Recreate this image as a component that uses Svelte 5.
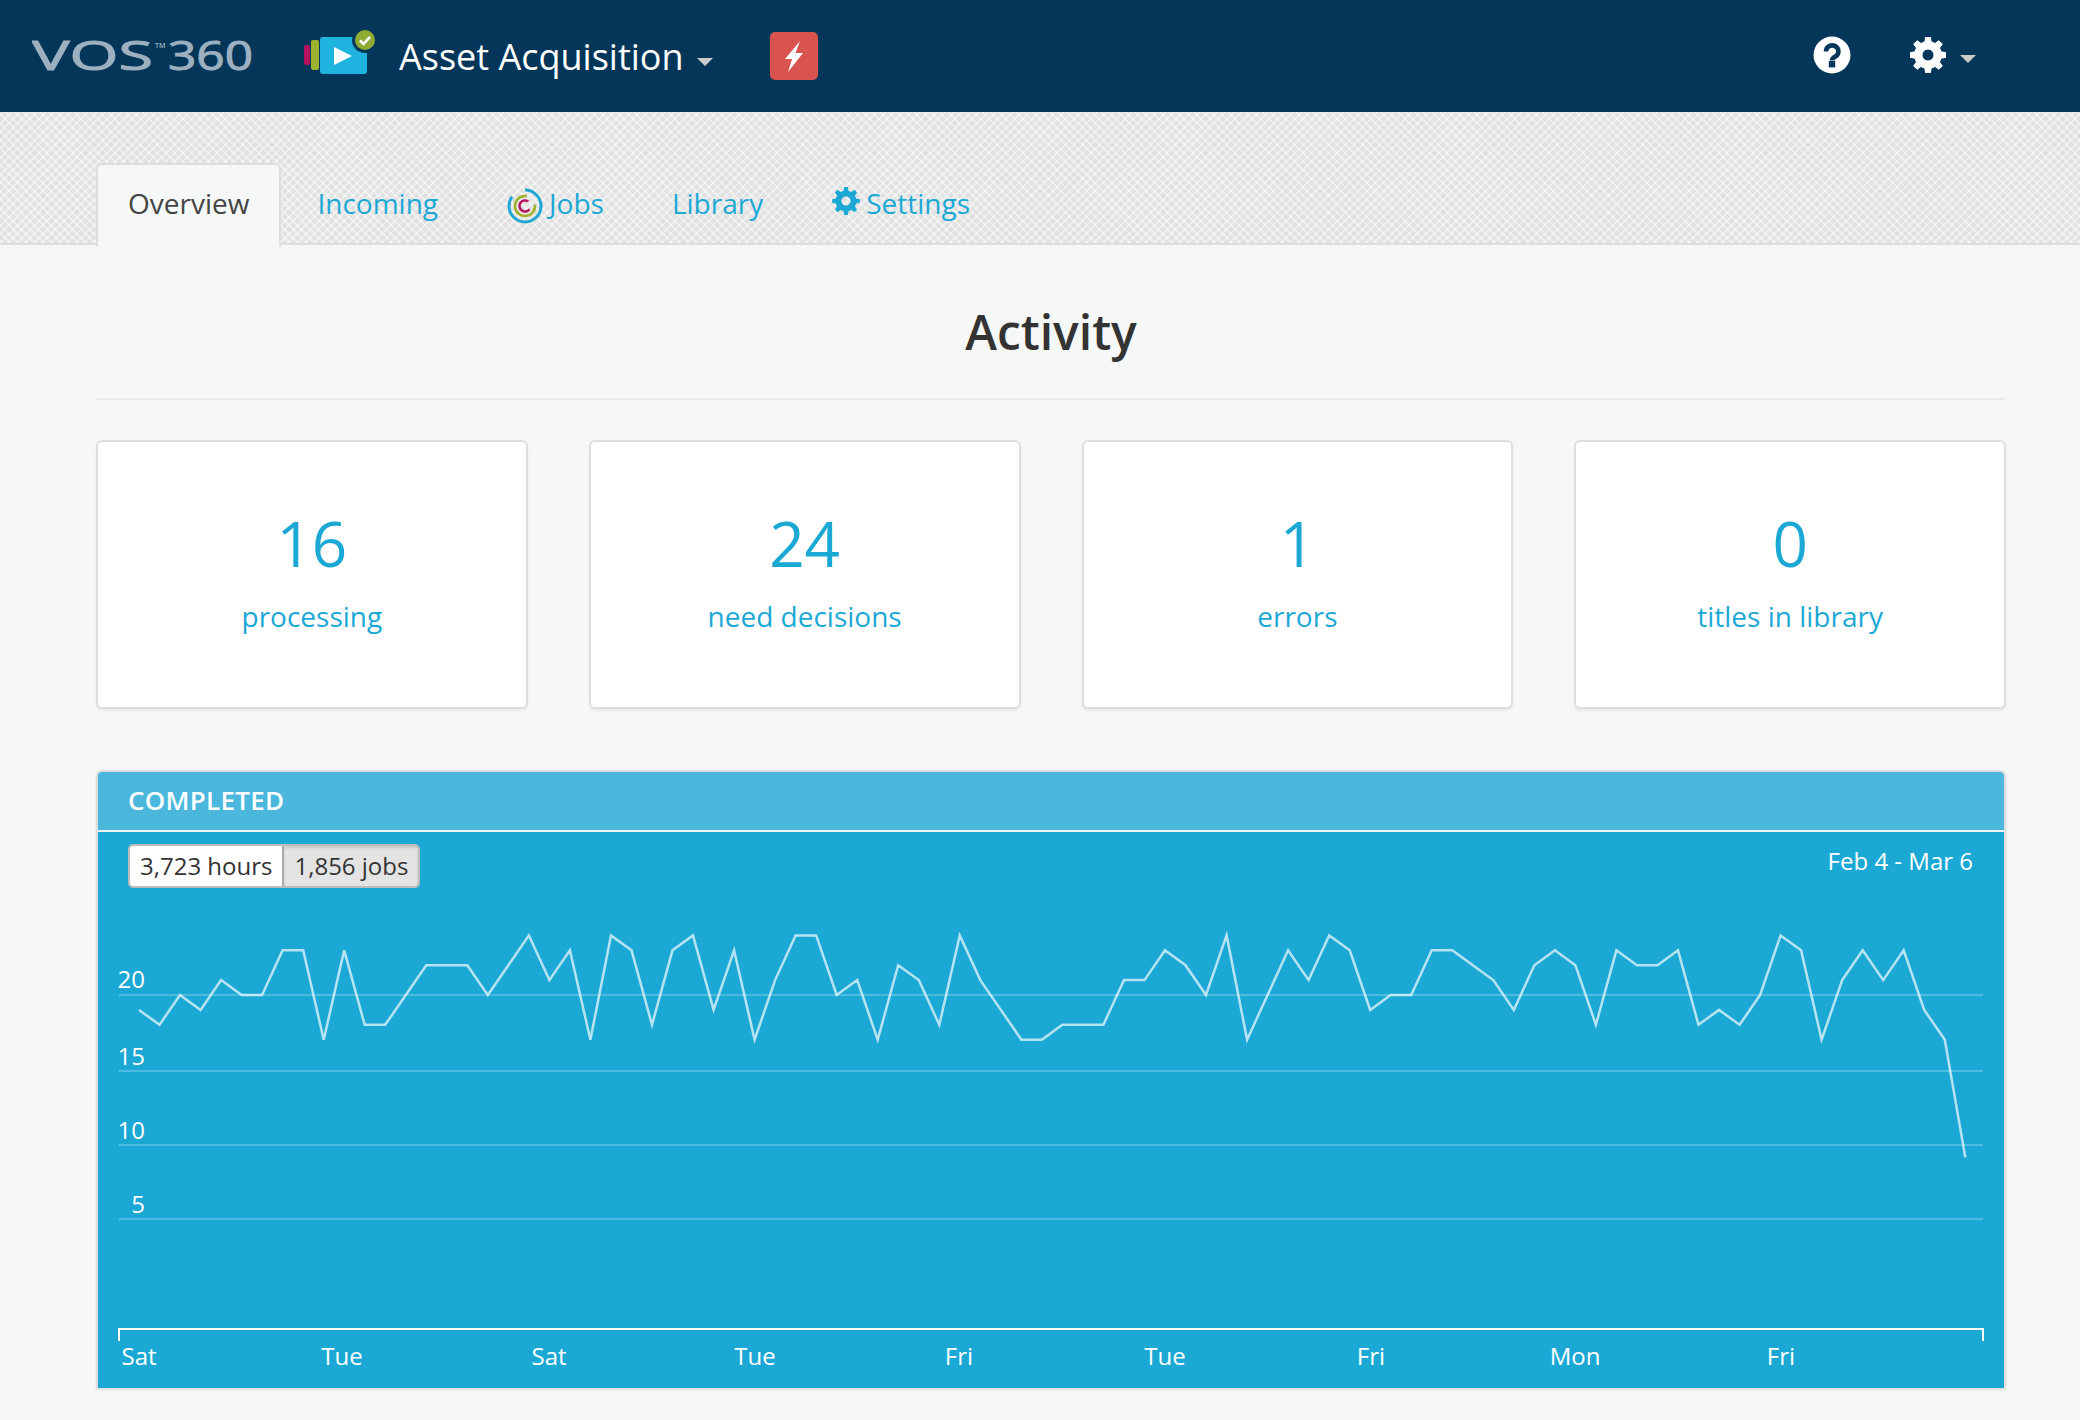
<script>
  const tabs = [
    { label: "Overview", active: true },
    { label: "Incoming" },
    { label: "Jobs", icon: "jobs" },
    { label: "Library" },
    { label: "Settings", icon: "gear" }
  ];

  const stats = [
    { value: 16, label: "processing" },
    { value: 24, label: "need decisions" },
    { value: 1, label: "errors" },
    { value: 0, label: "titles in library" }
  ];

  // jobs completed per sample, read off the reference chart
  const samples = [
    19, 18, 20, 19, 21, 20, 20, 23, 23, 17, 23, 18, 18, 20, 22, 22, 22, 20, 22, 24,
    21, 23, 17, 24, 23, 18, 23, 24, 19, 23, 17, 21, 24, 24, 20, 21, 17, 22, 21, 18,
    24, 21, 19, 17, 17, 18, 18, 18, 21, 21, 23, 22, 20, 24, 17, 20, 23, 21, 24, 23,
    19, 20, 20, 23, 23, 22, 21, 19, 22, 23, 22, 18, 23, 22, 22, 23, 18, 19, 18, 20,
    24, 23, 17, 21, 23, 21, 23, 19, 17, 9.1
  ];

  // chart space is the panel body: x from 98, y from 900
  const yFor = (v) => 95 + (20 - v) * 14.9;
  const points = samples.map((v, i) => `${(41 + i * 20.52).toFixed(1)},${yFor(v).toFixed(1)}`).join(" ");

  const gridLines = [
    { label: "20", y: 95, textY: 88 },
    { label: "15", y: 171, textY: 165 },
    { label: "10", y: 245, textY: 239 },
    { label: "5", y: 319, textY: 313 }
  ];

  const xLabels = [
    ["Sat", 41], ["Tue", 244], ["Sat", 451], ["Tue", 657], ["Fri", 861],
    ["Tue", 1067], ["Fri", 1273], ["Mon", 1477], ["Fri", 1683]
  ];

  function gearPath(cx, cy, outer, inner, hole, teeth = 8) {
    const step = (Math.PI * 2) / teeth;
    let d = "";
    for (let i = 0; i < teeth; i++) {
      const a = i * step - Math.PI / 2;
      const pts = [
        [inner, a - step * 0.3],
        [outer, a - step * 0.17],
        [outer, a + step * 0.17],
        [inner, a + step * 0.3]
      ];
      for (const [r, t] of pts) {
        d += `${d ? "L" : "M"}${(cx + r * Math.cos(t)).toFixed(2)} ${(cy + r * Math.sin(t)).toFixed(2)}`;
      }
    }
    d += `Z M${cx + hole} ${cy}a${hole} ${hole} 0 1 0 ${-hole * 2} 0a${hole} ${hole} 0 1 0 ${hole * 2} 0Z`;
    return d;
  }
</script>

<header class="topbar">
  <svg class="wordmark" width="224" height="60" viewBox="0 0 224 60" aria-label="VOS360">
    <text x="0" y="46" font-size="40" textLength="121" lengthAdjust="spacingAndGlyphs">VOS</text>
    <text x="123" y="24" font-size="7" class="tm">TM</text>
    <text x="136" y="46" font-size="40" textLength="85" lengthAdjust="spacingAndGlyphs">360</text>
  </svg>

  <svg class="app-icon" width="74" height="46" viewBox="0 0 74 46">
    <rect x="0" y="15" width="6" height="20" rx="2" fill="#b5125f" />
    <rect x="7" y="10" width="8" height="30" rx="2" fill="#9bb12f" />
    <rect x="16" y="7" width="47" height="37" rx="3" fill="#1fb3e0" />
    <path d="M30 17 L48 26 L30 35Z" fill="#fff" />
    <circle cx="61" cy="10" r="13" fill="#04365a" />
    <circle cx="61" cy="10" r="10" fill="#8fab33" />
    <path d="M56 10.5 L59.5 14 L66 7" fill="none" stroke="#fff" stroke-width="2.6" />
  </svg>

  <div class="app-name">Asset Acquisition<span class="caret"></span></div>

  <button class="bolt" aria-label="Alerts">
    <svg width="48" height="48" viewBox="0 0 48 48"><path d="M30 9 L15 27 H22 L18 40 L33 21 H25.5Z" fill="#fff" /></svg>
  </button>

  <div class="top-right">
    <svg width="38" height="38" viewBox="-19 -19 38 38" aria-label="Help">
      <circle r="18.5" fill="#fff" />
      <path d="M-6 -3.5 a6.2 6 0 1 1 9.5 5 c-2.4 1.4 -3.5 2 -3.5 4" fill="none" stroke="#04365a" stroke-width="4.6" />
      <rect x="-3.2" y="6" width="6.4" height="6.4" fill="#04365a" />
    </svg>
    <div class="menu">
      <svg width="36" height="36" viewBox="0 0 36 36" aria-label="Settings">
        <path d={gearPath(18, 18, 18, 13.5, 6)} fill="#fff" fill-rule="evenodd" stroke="#fff" stroke-linejoin="round" />
      </svg>
      <span class="caret"></span>
    </div>
  </div>
</header>

<nav class="tabband">
  {#each tabs as tab}
    <a class="tab" class:active={tab.active} href="#{tab.label}">
      {#if tab.icon === "jobs"}
        <svg class="tab-icon" width="36" height="36" viewBox="-18 -18 36 36">
          <circle r="16" fill="none" stroke="#1fa6d3" stroke-width="3" pathLength="100" stroke-dasharray="85 15" transform="rotate(-90)" />
          <circle r="10" fill="none" stroke="#a3b02c" stroke-width="2.6" pathLength="100" stroke-dasharray="80 20" transform="rotate(-8)" />
          <circle r="5.5" fill="none" stroke="#b5125f" stroke-width="2.6" pathLength="100" stroke-dasharray="75 25" transform="rotate(35)" />
        </svg>
      {:else if tab.icon === "gear"}
        <svg class="tab-icon gear" width="28" height="28" viewBox="0 0 28 28">
          <path d={gearPath(14, 14, 14, 10.5, 4.6)} fill="#1ca8d5" fill-rule="evenodd" />
        </svg>
      {/if}
      {tab.label}
    </a>
  {/each}
</nav>

<main class="content">
  <h1>Activity</h1>

  <section class="stats">
    {#each stats as s}
      <a class="stat" href="#{s.label}">
        <span class="stat-value">{s.value}</span>
        <span class="stat-label">{s.label}</span>
      </a>
    {/each}
  </section>

  <section class="panel">
    <h2>COMPLETED</h2>
    <div class="panel-body">
      <div class="toolbar">
        <div class="toggle">
          <span class="on">3,723 hours</span>
          <span class="off">1,856 jobs</span>
        </div>
        <span class="range">Feb 4 - Mar 6</span>
      </div>
      <svg class="chart" width="1906" height="485" viewBox="0 0 1906 485">
        {#each gridLines as g}
          <line x1="21" x2="1885" y1={g.y} y2={g.y} class="grid" />
          <text x="47" y={g.textY} text-anchor="end">{g.label}</text>
        {/each}
        <polyline {points} class="series" />
        <path d="M21 441 V429 H1885 V441" class="axis" />
        {#each xLabels as [label, x]}
          <text {x} y="465" text-anchor="middle">{label}</text>
        {/each}
      </svg>
    </div>
  </section>
</main>

<style>
  :global(body) {
    background: #f6f8f7;
    font-family: "Open Sans", "Liberation Sans", sans-serif;
    color: #333;
  }

  .topbar {
    height: 112px;
    background: #04365a;
    display: flex;
    align-items: center;
    padding: 0 104px 0 32px;
    box-sizing: border-box;
    color: #fff;
  }
  .wordmark {
    margin-right: 48px;
    margin-top: -4px;
  }
  .wordmark text {
    font-family: "Open Sans", sans-serif;
    font-weight: 500;
    fill: #9db0c0;
    stroke: #9db0c0;
    stroke-width: 1px;
  }
  .wordmark .tm {
    font-weight: 600;
    stroke: none;
  }
  .app-icon {
    margin-right: 21px;
    margin-top: -6px;
  }
  .app-name {
    font-size: 36px;
    margin-right: 57px;
    white-space: nowrap;
  }
  .caret {
    display: inline-block;
    width: 0;
    height: 0;
    border-left: 8px solid transparent;
    border-right: 8px solid transparent;
    border-top: 8px solid #ccc;
    margin-left: 13px;
    vertical-align: 4px;
  }
  .bolt {
    width: 48px;
    height: 48px;
    padding: 0;
    border: 0;
    border-radius: 5px;
    background: #d9534f;
  }
  .bolt svg {
    display: block;
  }
  .top-right {
    margin-left: auto;
    display: flex;
    align-items: center;
    gap: 59px;
    margin-top: -2px;
  }
  .menu {
    display: flex;
    align-items: center;
    gap: 6px;
  }
  .menu .caret {
    margin-top: 8px;
    margin-left: 8px;
    vertical-align: baseline;
  }

  .tabband {
    height: 133px;
    box-sizing: border-box;
    padding: 51px 0 0 96px;
    display: flex;
    gap: 6px;
    background-color: #e1e1e1;
    background-image:
      repeating-linear-gradient(45deg, rgba(255, 255, 255, 0.42) 0 2px, transparent 2px 6px),
      repeating-linear-gradient(-45deg, rgba(255, 255, 255, 0.42) 0 2px, transparent 2px 6px);
    border-bottom: 2px solid #dedede;
  }
  .tab {
    height: 82px;
    box-sizing: border-box;
    padding: 21px 31px 0;
    font-size: 28px;
    color: #1ca8d5;
    text-decoration: none;
    white-space: nowrap;
    display: flex;
    align-items: flex-start;
  }
  .tab.active {
    background: #f6f8f7;
    color: #444;
    border: 2px solid #dedede;
    border-bottom: 0;
    border-radius: 6px 6px 0 0;
    padding: 19px 30px 0;
    margin-bottom: -2px;
    margin-right: -1px;
    height: 84px;
  }
  .tab-icon {
    flex: none;
    margin-left: 1px;
    margin-right: 6px;
    margin-top: 4px;
  }
  .tab-icon.gear {
    margin-top: 3px;
    margin-right: 6px;
  }

  .content {
    padding: 0 74px 33px 96px;
  }
  h1 {
    margin: 0 0 40px;
    padding: 53px 0 33px;
    height: 67px;
    line-height: 67px;
    box-sizing: content-box;
    text-align: center;
    font-size: 48px;
    font-weight: 600;
    color: #333;
    border-bottom: 2px solid #e9eaea;
  }

  .stats {
    display: grid;
    grid-template-columns: repeat(4, 1fr);
    gap: 61px;
  }
  .stat {
    height: 269px;
    box-sizing: border-box;
    background: #fff;
    border: 2px solid #dedede;
    border-radius: 6px;
    box-shadow: 0 2px 3px rgba(0, 0, 0, 0.06);
    display: flex;
    flex-direction: column;
    align-items: center;
    padding-top: 55px;
    color: #1ca8d5;
    text-decoration: none;
  }
  .stat-value {
    font-size: 62px;
    font-weight: 400;
    line-height: 92px;
  }
  .stat-label {
    font-size: 28px;
    line-height: 40px;
    margin-top: 7px;
  }

  .panel {
    margin-top: 61px;
    border-top: 2px solid #dedede;
    border-left: 2px solid #dedede;
    border-right: 2px solid #dedede;
    border-radius: 6px 6px 0 0;
    box-shadow: 0 2px 3px rgba(0, 0, 0, 0.1);
    overflow: hidden;
  }
  h2 {
    margin: 0;
    height: 60px;
    box-sizing: border-box;
    padding: 0 30px;
    background: #4bb7dc;
    border-bottom: 2px solid #eef4f6;
    color: #fff;
    font-size: 26px;
    font-weight: 600;
    letter-spacing: 0.3px;
    line-height: 56px;
  }
  .panel-body {
    background: #1ca8d5;
    height: 556px;
  }
  .toolbar {
    height: 68px;
    box-sizing: border-box;
    padding: 12px 31px 0 30px;
    display: flex;
    justify-content: space-between;
    align-items: flex-start;
  }
  .toggle {
    display: flex;
    height: 44px;
    box-sizing: border-box;
    border: 2px solid #bcbcbc;
    border-radius: 5px;
    overflow: hidden;
    font-size: 24px;
    line-height: 40px;
    color: #333;
  }
  .toggle span {
    padding: 0 10px;
  }
  .toggle .on {
    background: #fff;
    border-right: 2px solid #aaa;
  }
  .toggle .off {
    background: #e4e4e4;
    box-shadow: inset 0 2px 3px rgba(0, 0, 0, 0.12);
  }
  .range {
    color: #fff;
    font-size: 24px;
    line-height: 34px;
    font-weight: 500;
  }
  .chart {
    display: block;
  }
  .chart text {
    fill: #fff;
    font-size: 24px;
    font-family: "Open Sans", sans-serif;
  }
  .grid {
    stroke: rgba(255, 255, 255, 0.22);
    stroke-width: 2;
  }
  .series {
    fill: none;
    stroke: rgba(255, 255, 255, 0.68);
    stroke-width: 2.5;
  }
  .axis {
    fill: none;
    stroke: #fff;
    stroke-width: 2;
  }
</style>
